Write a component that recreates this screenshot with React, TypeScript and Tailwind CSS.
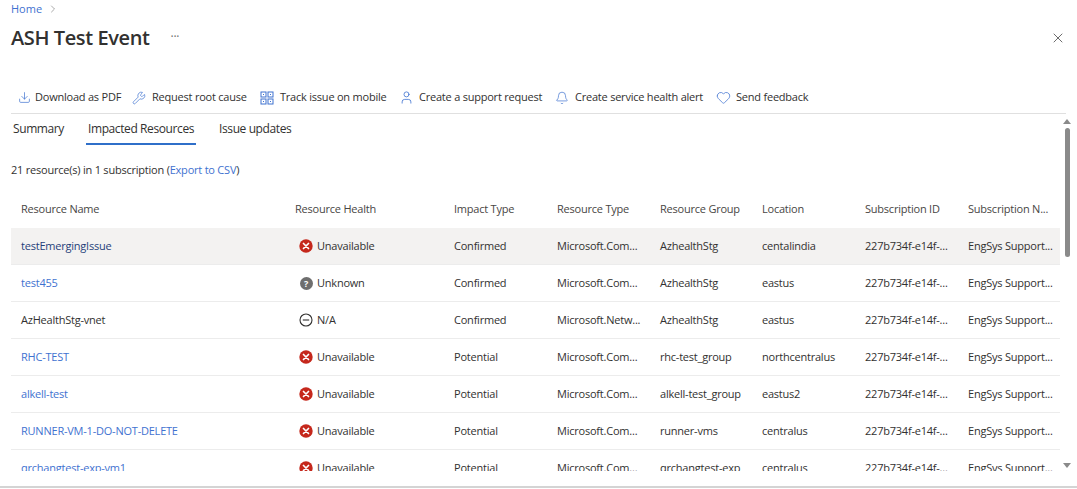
import React from "react";
import { Download, Wrench, User, Bell, Heart, X, ChevronRight } from "lucide-react";

const Qr = () => (
  <svg width="14" height="14" viewBox="0 0 14 14" fill="none" stroke="#3f72d0" strokeWidth="1">
    <rect x="1" y="1" width="5" height="5" />
    <rect x="8" y="1" width="5" height="5" />
    <rect x="1" y="8" width="5" height="5" />
    <rect x="8" y="8" width="5" height="5" />
    <rect x="3" y="3" width="1" height="1" fill="#3f72d0" stroke="none" />
    <rect x="10" y="3" width="1" height="1" fill="#3f72d0" stroke="none" />
    <rect x="3" y="10" width="1" height="1" fill="#3f72d0" stroke="none" />
    <rect x="10" y="10" width="1" height="1" fill="#3f72d0" stroke="none" />
  </svg>
);

const ErrorIcon = () => (
  <svg width="14" height="14" viewBox="0 0 14 14">
    <circle cx="7" cy="7" r="6.7" fill="#c5281c" />
    <path d="M4.5 4.5l5 5M9.5 4.5l-5 5" stroke="#fff" strokeWidth="1.7" strokeLinecap="round" />
  </svg>
);

const UnknownIcon = () => (
  <div className="w-[13px] h-[13px] ml-[0.5px] mr-[0.5px] rounded-full bg-[#6e6e6e] text-white text-[9px] font-bold leading-[13px] text-center">?</div>
);

const NaIcon = () => (
  <svg width="14" height="14" viewBox="0 0 14 14" fill="none" stroke="#323130" strokeWidth="1.1">
    <circle cx="7" cy="7" r="6" />
    <path d="M3.8 7h6.4" />
  </svg>
);

const toolbar = [
  { icon: <span className="ml-[3px]"><Download size={13} strokeWidth={1.3} color="#3f72d0" /></span>, label: "Download as PDF", w: "w-[117px]" },
  { icon: <Wrench size={14} strokeWidth={1.2} color="#3f72d0" />, label: "Request root cause", w: "w-[128px]" },
  { icon: <Qr />, label: "Track issue on mobile", w: "w-[139px]" },
  { icon: <User size={15} strokeWidth={1.3} color="#3f72d0" />, label: "Create a support request", w: "w-[156px]" },
  { icon: <Bell size={14} strokeWidth={1.2} color="#3f72d0" />, label: "Create service health alert", w: "w-[161px]" },
  { icon: <Heart size={15} strokeWidth={1.2} color="#3f72d0" />, label: "Send feedback", w: "w-[100px]" },
];

const columns = ["Resource Name", "Resource Health", "Impact Type", "Resource Type", "Resource Group", "Location", "Subscription ID", "Subscription N..."];

type Row = { name: string; link: boolean; health: string; impact: string; type: string; group: string; loc: string; selected?: boolean };

const rows: Row[] = [
  { name: "testEmergingIssue", link: true, health: "Unavailable", impact: "Confirmed", type: "Microsoft.Com...", group: "AzhealthStg", loc: "centalindia", selected: true },
  { name: "test455", link: true, health: "Unknown", impact: "Confirmed", type: "Microsoft.Com...", group: "AzhealthStg", loc: "eastus" },
  { name: "AzHealthStg-vnet", link: false, health: "N/A", impact: "Confirmed", type: "Microsoft.Netw...", group: "AzhealthStg", loc: "eastus" },
  { name: "RHC-TEST", link: true, health: "Unavailable", impact: "Potential", type: "Microsoft.Com...", group: "rhc-test_group", loc: "northcentralus" },
  { name: "alkell-test", link: true, health: "Unavailable", impact: "Potential", type: "Microsoft.Com...", group: "alkell-test_group", loc: "eastus2" },
  { name: "RUNNER-VM-1-DO-NOT-DELETE", link: true, health: "Unavailable", impact: "Potential", type: "Microsoft.Com...", group: "runner-vms", loc: "centralus" },
  { name: "qrchangtest-exp-vm1", link: true, health: "Unavailable", impact: "Potential", type: "Microsoft.Com...", group: "qrchangtest-exp", loc: "centralus" },
];

const gridCols = "grid grid-cols-[274px_159px_103px_103px_102px_103px_103px_92px] items-center pl-[10px]";

function HealthIcon({ h }: { h: string }) {
  if (h === "Unavailable") return <ErrorIcon />;
  if (h === "Unknown") return <UnknownIcon />;
  return <NaIcon />;
}

export default function App() {
  return (
    <div className="w-[1077px] h-[489px] overflow-hidden bg-white text-[#323130] text-[11px] tracking-[-0.22px] font-['Open_Sans','Noto_Sans',sans-serif] flex flex-col">
      <div className="h-[18px] pl-[11px] flex items-center gap-[5px] text-[#3f72d0]">
        <span className="tracking-normal">Home</span>
        <ChevronRight size={12} strokeWidth={1.2} color="#707070" />
      </div>
      <div className="h-[40px] pl-[11px] pr-[11px] flex items-center justify-between">
        <div className="flex items-center">
          <h1 className="text-[20px] leading-[26px] font-semibold tracking-[-0.4px]">ASH Test Event</h1>
          <span className="ml-[21px] text-[12px] text-[#707070] -mt-[2px]">···</span>
        </div>
        <X size={16} strokeWidth={1.3} color="#555" />
      </div>
      <div className="mt-[24px] h-[31px] mx-[11px] pl-[4px] flex items-center border-b border-[#e0e0e0] box-content">
        {toolbar.map((t) => (
          <div key={t.label} className={`${t.w} flex items-center gap-[4px] shrink-0`}>
            <span className="w-[16px] flex justify-start">{t.icon}</span>
            <span className="whitespace-nowrap">{t.label}</span>
          </div>
        ))}
      </div>
      <div className="mt-[4px] pl-[13px] h-[26px] flex items-start text-[12px] gap-[23px] leading-[22px] tracking-[-0.4px]">
        <span className="w-[50px]">Summary</span>
        <span className="h-[27px] border-b-2 border-[#2f6fc9] px-[2px]">Impacted Resources</span>
        <span>Issue updates</span>
      </div>
      <div className="mt-[18px] pl-[11px] h-[16px] flex items-center">
        <span>21 resource(s) in 1 subscription (</span>
        <span className="text-[#3f72d0]">Export to CSV</span>
        <span>)</span>
      </div>
      <div className="flex flex-1 min-h-0">
        <div className="w-[1049px] ml-[11px] h-[293px] overflow-hidden shrink-0">
          <div className={`${gridCols} h-[50px] pt-[12px] font-medium text-[#484644]`}>
            {columns.map((c) => (
              <span key={c} className="whitespace-nowrap">{c}</span>
            ))}
          </div>
          {rows.map((r) => (
            <div key={r.name} className={`${gridCols} h-[37px] border-b border-[#ececec] ${r.selected ? "bg-[#f3f2f1]" : ""}`}>
              <span className={r.selected ? "text-[#1f3f7a]" : r.link ? "text-[#3f72d0]" : ""}>{r.name}</span>
              <span className="flex items-center gap-[4px] pl-[4px]">
                <HealthIcon h={r.health} />
                <span>{r.health}</span>
              </span>
              <span>{r.impact}</span>
              <span className="whitespace-nowrap">{r.type}</span>
              <span className="whitespace-nowrap">{r.group}</span>
              <span className="whitespace-nowrap">{r.loc}</span>
              <span className="whitespace-nowrap">227b734f-e14f-...</span>
              <span className="whitespace-nowrap">EngSys Support...</span>
            </div>
          ))}
        </div>
        <div className="w-[6px] ml-[4px] flex flex-col items-center -mt-[59px] h-[349px]">
          <div className="w-0 h-0 border-l-[4px] border-r-[4px] border-b-[5px] border-l-transparent border-r-transparent border-b-[#8a8a8a]" />
          <div className="mt-[4px] w-[5px] h-[129px] rounded-full bg-[#8a8a8a]" />
          <div className="mt-auto w-0 h-0 border-l-[4px] border-r-[4px] border-t-[5px] border-l-transparent border-r-transparent border-t-[#8a8a8a]" />
        </div>
      </div>
      <div className="h-[2px] mb-[1px] bg-[#d4d4d4] shrink-0" />
    </div>
  );
}
